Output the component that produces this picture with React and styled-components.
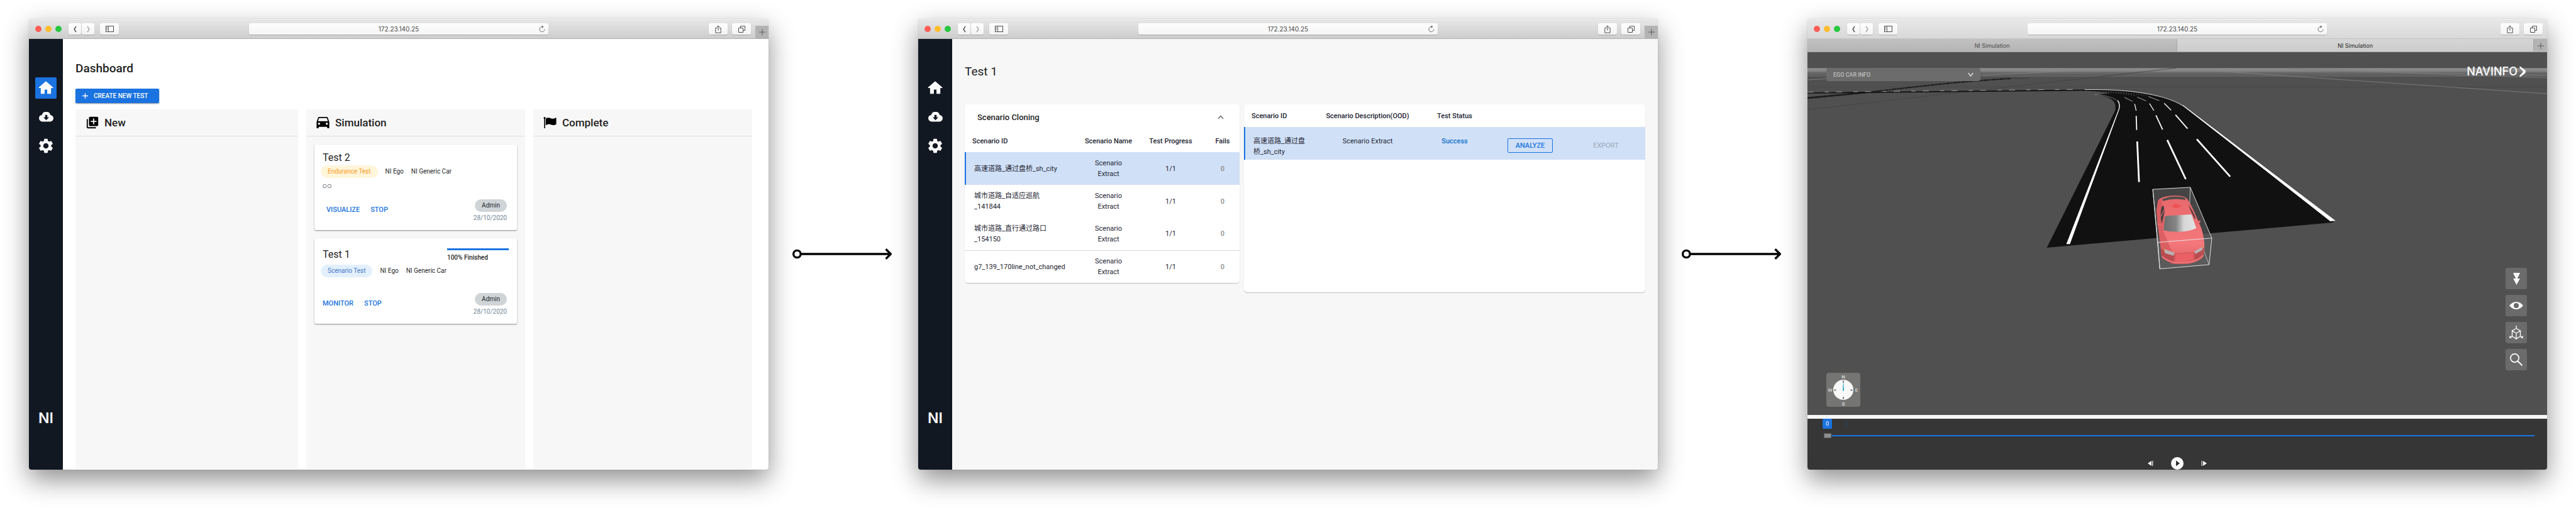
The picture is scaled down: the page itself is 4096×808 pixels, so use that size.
import React from "react";
import styled, { createGlobalStyle, css } from "styled-components";
import { MdSettings, MdLibraryAdd, MdAllInclusive } from "react-icons/md";

const GlobalStyle = createGlobalStyle`
  *, *::before, *::after { box-sizing: border-box; }
  body { margin: 0; background: #fff; }
  button, input, select { font: inherit; color: inherit; margin: 0; }
  button { border: 0; background: none; padding: 0; cursor: pointer; }
  svg { display: block; flex: none; }
  h1, h2, h3, p { margin: 0; font: inherit; }
`;

const blue = "#1a73e0";
const ink = "#1c2430";

/* ---------- page ---------- */

const Page = styled.div`
  min-height: 100vh;
  padding: 0 46px;
  display: grid;
  grid-template-columns: minmax(0, 1fr) 238px minmax(0, 1fr) 238px minmax(0, 1fr);
  font-family: Roboto, "Noto Sans CJK SC", sans-serif;
  color: #1f1f1f;
`;

const Connector = styled.div`
  align-self: center;
  padding-left: 38px;
`;

const Window = styled.section`
  margin: 30px 0 61px;
  display: flex;
  flex-direction: column;
  border-radius: 4px;
  background: #fff;
  box-shadow: 0 0 1px rgba(0, 0, 0, 0.4), 0 16px 40px rgba(0, 0, 0, 0.44);
  overflow: hidden;
`;

/* ---------- browser chrome ---------- */

const Chrome = styled.header`
  height: 32px;
  display: grid;
  grid-template-columns: minmax(0, 1fr) 476px minmax(0, 1fr);
  align-items: center;
  background: linear-gradient(#e7e7e7, ${(p) => (p.$tabs ? "#d8d8d8" : "#cdcdcd")});
  border-top: 1px solid #efefef;
  border-bottom: 1px solid ${(p) => (p.$tabs ? "#c4c4c4" : "#b2b2b2")};
`;

const ChromeLeft = styled.div`
  display: flex;
  align-items: center;
  padding-left: 10px;
`;

const Lights = styled.div`
  display: flex;
  gap: 6px;
  margin-right: 11px;
`;

const Light = styled.button`
  width: 10px;
  height: 10px;
  border-radius: 50%;
  background: ${(p) => p.$color};
`;

const ChromeRight = styled.div`
  display: flex;
  align-items: center;
  justify-content: flex-end;
  align-self: stretch;
  gap: 7px;
  padding-right: ${(p) => (p.$tabs ? "7px" : "0")};
`;

const ChromeButton = styled.button`
  width: ${(p) => (p.$small ? "20px" : "30px")};
  height: 18px;
  margin-left: ${(p) => p.$gap || 0}px;
  display: flex;
  align-items: center;
  justify-content: center;
  border-radius: 3px;
  background: linear-gradient(#fefefe, #f3f3f3);
  box-shadow: 0 1px 1px rgba(0, 0, 0, 0.2);
  color: ${(p) => (p.$dim ? "#a4a4a4" : "#4e4e4e")};
`;

const PlusButton = styled.button`
  width: 21px;
  height: ${(p) => (p.$tabs ? "auto" : "20px")};
  align-self: ${(p) => (p.$tabs ? "stretch" : "flex-end")};
  display: flex;
  align-items: center;
  justify-content: center;
  background: #b3b3b3;
  color: #5c5c5c;
`;

const AddressBar = styled.div`
  height: 18px;
  display: flex;
  align-items: center;
  padding-left: 20px;
  border-radius: 3px;
  background: linear-gradient(#fdfdfd, #f5f5f5);
  box-shadow: 0 1px 1px rgba(0, 0, 0, 0.2);
`;

const Address = styled.input`
  flex: 1;
  min-width: 0;
  height: 18px;
  padding: 0;
  border: 0;
  background: none;
  text-align: center;
  font-family: Inter, sans-serif;
  font-size: 10px;
  color: #474747;
`;

const Reload = styled.button`
  width: 20px;
  display: flex;
  justify-content: center;
  color: #6e6e6e;
`;

const TabBar = styled.div`
  height: 21px;
  display: grid;
  grid-template-columns: 1fr 1fr;
`;

const TabGroup = styled.div`
  display: flex;
`;

const Tab = styled.button`
  flex: 1;
  font-family: Inter, sans-serif;
  font-size: 9px;
  border-right: 1px solid #a9a9a9;
  border-bottom: 1px solid #a9a9a9;
  background: ${(p) => (p.$active ? "linear-gradient(#d6d6d6, #cccccc)" : "linear-gradient(#c1c1c1, #b5b5b5)")};
  color: ${(p) => (p.$active ? "#1f1f1f" : "#4a4a4a")};
`;

const Plus = ({ size = 10, width = 1 }) => (
  <svg width={size} height={size} viewBox="0 0 10 10" stroke="currentColor" strokeWidth={width}>
    <path d="M5 0V10M0 5H10" />
  </svg>
);

const Chevron = ({ d, w = 7, h = 11, width = 1.4 }) => (
  <svg width={w} height={h} viewBox={`0 0 ${w} ${h}`} fill="none" stroke="currentColor" strokeWidth={width}>
    <path d={d} />
  </svg>
);

function BrowserChrome({ tabs }) {
  return (
    <>
      <Chrome $tabs={tabs}>
        <ChromeLeft>
          <Lights>
            <Light $color="#ff5d55" aria-label="Close" />
            <Light $color="#fdbd2e" aria-label="Minimise" />
            <Light $color="#27c840" aria-label="Zoom" />
          </Lights>
          <ChromeButton $small aria-label="Back">
            <Chevron d="M5 1L2 5.5L5 10" />
          </ChromeButton>
          <ChromeButton $small $gap={1} $dim aria-label="Forward">
            <Chevron d="M2 1L5 5.5L2 10" />
          </ChromeButton>
          <ChromeButton $gap={9} aria-label="Show sidebar">
            <svg width="13" height="10" viewBox="0 0 13 10" fill="none" stroke="currentColor">
              <rect x=".5" y=".5" width="12" height="9" />
              <path d="M4.5 0V10M1.5 2.5H3.5M1.5 4.5H3.5M1.5 6.5H3.5" strokeWidth=".8" />
            </svg>
          </ChromeButton>
        </ChromeLeft>
        <AddressBar>
          <Address aria-label="Address" defaultValue="172.23.140.25" />
          <Reload aria-label="Reload">
            <svg width="10" height="12" viewBox="0 0 10 12" fill="none" stroke="currentColor">
              <path d="M8.9 6.6A4 4 0 1 1 5.2 2.6" />
              <path d="M4.6 .2L7.6 2.6L4.6 5Z" fill="currentColor" stroke="none" />
            </svg>
          </Reload>
        </AddressBar>
        <ChromeRight $tabs={tabs}>
          <ChromeButton aria-label="Share">
            <svg width="10" height="13" viewBox="0 0 10 13" fill="none" stroke="currentColor">
              <path d="M3.2 4.5H.8V12.2H9.2V4.5H6.8M5 8.5V1M2.7 3.2L5 .9L7.3 3.2" />
            </svg>
          </ChromeButton>
          <ChromeButton aria-label="Show all tabs">
            <svg width="11" height="11" viewBox="0 0 11 11" fill="none" stroke="currentColor">
              <path d="M.5 3.5H7.5V10.5H.5ZM3.5 3.5V.5H10.5V7.5H7.5" />
            </svg>
          </ChromeButton>
          {!tabs && (
            <PlusButton aria-label="New tab">
              <Plus />
            </PlusButton>
          )}
        </ChromeRight>
      </Chrome>
      {tabs && (
        <TabBar role="tablist">
          <Tab role="tab" aria-selected="false">NI Simulation</Tab>
          <TabGroup>
            <Tab role="tab" aria-selected="true" $active>NI Simulation</Tab>
            <PlusButton $tabs aria-label="New tab">
              <Plus />
            </PlusButton>
          </TabGroup>
        </TabBar>
      )}
    </>
  );
}

/* ---------- app frame ---------- */

const AppBody = styled.div`
  flex: 1;
  display: flex;
`;

const SideNav = styled.nav`
  width: 54px;
  flex: none;
  display: flex;
  flex-direction: column;
  align-items: center;
  gap: 12px;
  padding: 61px 0 68px;
  background: #121822;
  color: #fafafa;
`;

const NavLink = styled.a`
  width: 34px;
  height: 34px;
  display: flex;
  align-items: center;
  justify-content: center;
  border-radius: 2px;
  color: inherit;
  background: ${(p) => (p.$active ? blue : "transparent")};
`;

const Brand = styled.div`
  margin-top: auto;
  font-family: Inter, sans-serif;
  font-size: 23px;
  line-height: 28px;
  font-weight: 600;
`;

function Sidebar({ active }) {
  return (
    <SideNav aria-label="Main">
      <NavLink href="#home" aria-label="Home" $active={active}>
        <svg width="28" height="28" viewBox="0 0 24 24" fill="currentColor" stroke="currentColor" strokeLinejoin="round">
          <path d="M9.7 19.5V13.7H14.3V19.5H18.5V11.5H21.4L12 3.4L2.6 11.5H5.5V19.5Z" />
        </svg>
      </NavLink>
      <NavLink href="#download" aria-label="Download">
        <svg width="23" height="16" viewBox="0 0 23 16">
          <path
            fill="currentColor"
            d="M5.6 15.4A5.3 5.3 0 0 1 0 10.2A5.2 5.2 0 0 1 4.6 5A7 7 0 0 1 18.2 5A5.2 5.2 0 0 1 23 10.2A5.3 5.3 0 0 1 17.4 15.4Z"
          />
          <path fill="#121822" d="M9.8 4.8H13.2V8.6H16L11.5 13.2L7 8.6H9.8Z" />
        </svg>
      </NavLink>
      <NavLink href="#settings" aria-label="Settings">
        <MdSettings size={28} />
      </NavLink>
      <Brand>NI</Brand>
    </SideNav>
  );
}

/* ---------- dashboard ---------- */

const Dashboard = styled.main`
  flex: 1;
  min-width: 0;
  display: flex;
  flex-direction: column;
  padding: 35px 26px 1px 20px;
`;

const PageTitle = styled.h1`
  font-size: 19px;
  line-height: 24px;
  font-weight: ${(p) => p.$weight || 400};
`;

const CreateButton = styled.button`
  align-self: flex-start;
  height: 23px;
  min-width: 133px;
  margin: 20px 0 10px;
  padding: 0 14px 0 11px;
  display: flex;
  align-items: center;
  gap: 9px;
  border-radius: 2px;
  background: ${blue};
  color: #fff;
  font-size: 10px;
  font-weight: 500;
  box-shadow: 0 1px 2px rgba(0, 0, 0, 0.45);
`;

const Board = styled.div`
  flex: 1;
  display: grid;
  grid-template-columns: 354fr 348fr 348fr;
  gap: 13px;
`;

const Column = styled.section`
  background: #f7f7f7;
  border-radius: 1px;
`;

const ColumnHeader = styled.h2`
  height: 43px;
  display: flex;
  align-items: center;
  gap: 9px;
  padding-left: 16px;
  border-bottom: 1px solid #dedede;
  font-size: 17px;
  font-weight: 500;
`;

const IconSlot = styled.span`
  width: 21px;
  display: flex;
  justify-content: center;
  color: #000;
`;

const Cards = styled.div`
  display: grid;
  gap: 13px;
  padding: 13px;
`;

const Card = styled.article`
  min-height: 136px;
  display: flex;
  flex-direction: column;
  padding: ${(p) => (p.$roomy ? "16px" : "11px")} 13px 12px;
  border-radius: 2px;
  background: #fff;
  box-shadow: 0 1px 2px rgba(0, 0, 0, 0.45);
`;

const CardHeader = styled.div`
  display: flex;
  justify-content: space-between;
  min-height: ${(p) => (p.$roomy ? "26px" : "22px")};
`;

const CardTitle = styled.h3`
  font-size: 16px;
  line-height: 20px;
`;

const ProgressBox = styled.div`
  width: 98px;
  font-size: 10px;
  line-height: 14px;
  font-weight: 500;
`;

const ProgressTrack = styled.div`
  height: 3px;
  margin-bottom: 5px;
  background: #d0e0f7;
`;

const ProgressFill = styled.div`
  height: 3px;
  background: ${blue};
`;

const Chip = styled.span`
  height: 20px;
  padding: 0 11px;
  border-radius: 10px;
  font-size: 10px;
  line-height: 20px;
  ${(p) =>
    ({
      amber: css`background: #fff5da; color: #fb9a1c;`,
      sky: css`background: #e3f0fc; color: #4377c9;`,
      grey: css`background: #cfd4d7; color: #23282c;`,
    })[p.$tone]}
`;

const Tags = styled.div`
  display: flex;
  align-items: center;
  gap: 12px;
  margin-left: -3px;
  font-size: 10px;
  line-height: 20px;
`;

const Endless = styled.div`
  margin-top: 6px;
  color: #8a9094;
`;

const CardFooter = styled.div`
  margin-top: auto;
  display: flex;
  align-items: center;
  justify-content: space-between;
  padding-right: 3px;
`;

const Actions = styled.div`
  display: flex;
  gap: 17px;
  padding: 0 0 4px ${(p) => (p.$inset ? "6px" : "0")};
`;

const TextButton = styled.button`
  font-size: 11px;
  line-height: 14px;
  font-weight: 500;
  color: ${blue};
`;

const Owner = styled.div`
  display: flex;
  flex-direction: column;
  align-items: flex-end;
  gap: 3px;
`;

const DateText = styled.time`
  font-size: 10px;
  line-height: 14px;
  color: #748797;
`;

const tests = [
  { name: "Test 2", kind: "Endurance Test", tone: "amber", action: "VISUALIZE", endless: true },
  { name: "Test 1", kind: "Scenario Test", tone: "sky", action: "MONITOR", progress: 100 },
];

function TestCard({ test }) {
  const roomy = test.progress !== undefined;
  return (
    <Card $roomy={roomy}>
      <CardHeader $roomy={roomy}>
        <CardTitle>{test.name}</CardTitle>
        {roomy && (
          <ProgressBox>
            <ProgressTrack>
              <ProgressFill style={{ width: `${test.progress}%` }} />
            </ProgressTrack>
            {test.progress}% Finished
          </ProgressBox>
        )}
      </CardHeader>
      <Tags>
        <Chip $tone={test.tone}>{test.kind}</Chip>
        <span>NI Ego</span>
        <span>NI Generic Car</span>
      </Tags>
      {test.endless && (
        <Endless>
          <MdAllInclusive size={14} />
        </Endless>
      )}
      <CardFooter>
        <Actions $inset={test.endless}>
          <TextButton>{test.action}</TextButton>
          <TextButton>STOP</TextButton>
        </Actions>
        <Owner>
          <Chip $tone="grey">Admin</Chip>
          <DateText dateTime="2020-10-28">28/10/2020</DateText>
        </Owner>
      </CardFooter>
    </Card>
  );
}

function DashboardWindow() {
  return (
    <Window>
      <BrowserChrome />
      <AppBody>
        <Sidebar active />
        <Dashboard>
          <PageTitle $weight={500}>Dashboard</PageTitle>
          <CreateButton>
            <Plus size={9} width={1.4} />
            CREATE NEW TEST
          </CreateButton>
          <Board>
            <Column>
              <ColumnHeader>
                <IconSlot>
                  <MdLibraryAdd size={22} />
                </IconSlot>
                New
              </ColumnHeader>
            </Column>
            <Column>
              <ColumnHeader>
                <IconSlot>
                  <svg width="21" height="18" viewBox="3 5 18 16" fill="currentColor">
                    <path d="M18.92 6.01C18.72 5.42 18.16 5 17.5 5h-11c-.66 0-1.21.42-1.42 1.01L3 12v8c0 .55.45 1 1 1h1c.55 0 1-.45 1-1v-1h12v1c0 .55.45 1 1 1h1c.55 0 1-.45 1-1v-8l-2.08-5.99zM6.5 16c-.83 0-1.5-.67-1.5-1.5S5.67 13 6.5 13s1.5.67 1.5 1.5S7.33 16 6.5 16zm11 0c-.83 0-1.5-.67-1.5-1.5s.67-1.5 1.5-1.5 1.5.67 1.5 1.5-.67 1.5-1.5 1.5zM5 11l1.5-4.5h11L19 11H5z" />
                  </svg>
                </IconSlot>
                Simulation
              </ColumnHeader>
              <Cards>
                {tests.map((t) => (
                  <TestCard key={t.name} test={t} />
                ))}
              </Cards>
            </Column>
            <Column>
              <ColumnHeader>
                <IconSlot>
                  <svg width="21" height="18" viewBox="0 0 21 18">
                    <circle cx="2" cy="1.6" r="1.6" />
                    <path d="M1.2 2H2.8V18H1.2ZM3.8 2.6C7 .8 9.5 1.2 12 2.3C15 3.5 17.5 2.6 20.5 1V11.4C17.5 13.4 15 13.4 12 12.2C9.5 11.2 7 11.4 3.8 13.2Z" />
                  </svg>
                </IconSlot>
                Complete
              </ColumnHeader>
            </Column>
          </Board>
        </Dashboard>
      </AppBody>
    </Window>
  );
}

/* ---------- test details ---------- */

const Details = styled.main`
  flex: 1;
  min-width: 0;
  padding: 40px 20px 0;
  background: #f7f7f7;
`;

const Panels = styled.div`
  margin-top: 40px;
  display: grid;
  grid-template-columns: 437fr 638fr;
  gap: 7px;
  align-items: start;
`;

const Panel = styled.section`
  min-height: ${(p) => (p.$tall ? "299px" : "0")};
  border-radius: 5px;
  background: #fff;
  box-shadow: 0 1px 1px rgba(0, 0, 0, 0.25);
  overflow: hidden;
`;

const PanelHeader = styled.div`
  height: 40px;
  display: flex;
  align-items: center;
  justify-content: space-between;
  padding: 0 25px 0 20px;
  font-size: 13px;
`;

const PanelTitle = styled.h2`
  font-weight: 500;
`;

const Collapse = styled.button`
  color: #6e6e6e;
`;

const Table = styled.table`
  width: 100%;
  table-layout: fixed;
  border-collapse: collapse;
  font-size: 11px;
  line-height: 17px;
  color: ${ink};
`;

const HeadCell = styled.th`
  height: 36px;
  padding: 0 0 0 ${(p) => (p.$left ? "12px" : "0")};
  font-weight: 500;
  text-align: ${(p) => (p.$left ? "left" : "center")};
  white-space: nowrap;
`;

const Row = styled.tr`
  height: 52px;
  background: ${(p) => (p.$selected ? "#d0e0f7" : "#fff")};
  box-shadow: ${(p) => (p.$selected ? `inset 2px 0 0 ${blue}` : "none")};
  border-bottom: ${(p) => (p.$ruled ? "1px solid #d6d6d6" : "0")};
`;

const Cell = styled.td`
  padding: ${(p) => p.$top || 0}px 0 0 ${(p) => (p.$left ? "15px" : "0")};
  text-align: ${(p) => (p.$left ? "left" : "center")};
  vertical-align: ${(p) => (p.$top ? "top" : "middle")};
`;

const Fails = styled.strong`
  font-weight: 500;
  color: #8a8a8a;
`;

const Status = styled.strong`
  font-weight: 500;
  color: #0f6fc8;
`;

const OutlineButton = styled.button`
  width: 72px;
  height: 23px;
  border: 1px solid ${(p) => (p.disabled ? "transparent" : blue)};
  border-radius: 2px;
  font-size: 11px;
  line-height: 14px;
  color: ${(p) => (p.disabled ? "#9ba8ba" : blue)};
  font-weight: ${(p) => (p.disabled ? 400 : 500)};
`;

const scenarios = [
  { id: ["高速道路_通过盘桥_sh_city"], selected: true },
  { id: ["城市道路_自适应巡航", "_141844"] },
  { id: ["城市道路_直行通过路口", "_154150"], ruled: true },
  { id: ["g7_139_170line_not_changed"] },
];

const Lines = ({ of }) =>
  of.map((line, i) => (
    <React.Fragment key={line}>
      {i > 0 && <br />}
      {line}
    </React.Fragment>
  ));

function DetailsWindow() {
  return (
    <Window>
      <BrowserChrome />
      <AppBody>
        <Sidebar />
        <Details>
          <PageTitle>Test 1</PageTitle>
          <Panels>
            <Panel>
              <PanelHeader>
                <PanelTitle>Scenario Cloning</PanelTitle>
                <Collapse aria-label="Collapse">
                  <Chevron d="M1 6L5 1.5L9 6" w={10} h={7} width={1.5} />
                </Collapse>
              </PanelHeader>
              <Table>
                <colgroup>
                  <col />
                  <col width="87" />
                  <col width="111" />
                  <col width="54" />
                </colgroup>
                <thead>
                  <tr>
                    <HeadCell $left>Scenario ID</HeadCell>
                    <HeadCell>Scenario Name</HeadCell>
                    <HeadCell>Test Progress</HeadCell>
                    <HeadCell>Fails</HeadCell>
                  </tr>
                </thead>
                <tbody>
                  {scenarios.map((s) => (
                    <Row key={s.id[0]} $selected={s.selected} $ruled={s.ruled}>
                      <Cell $left>
                        <Lines of={s.id} />
                      </Cell>
                      <Cell>
                        <Lines of={["Scenario", "Extract"]} />
                      </Cell>
                      <Cell>1/1</Cell>
                      <Cell>
                        <Fails>0</Fails>
                      </Cell>
                    </Row>
                  ))}
                </tbody>
              </Table>
            </Panel>
            <Panel $tall>
              <Table>
                <colgroup>
                  <col />
                  <col width="153" />
                  <col width="124" />
                  <col width="116" />
                  <col width="125" />
                </colgroup>
                <thead>
                  <tr>
                    <HeadCell $left>Scenario ID</HeadCell>
                    <HeadCell>Scenario Description(OOD)</HeadCell>
                    <HeadCell>Test Status</HeadCell>
                    <HeadCell aria-label="Analyze" />
                    <HeadCell aria-label="Export" />
                  </tr>
                </thead>
                <tbody>
                  <Row $selected>
                    <Cell $left $top={14}>
                      <Lines of={["高速道路_通过盘", "桥_sh_city"]} />
                    </Cell>
                    <Cell $top={14}>Scenario Extract</Cell>
                    <Cell $top={14}>
                      <Status>Success</Status>
                    </Cell>
                    <Cell $top={18}>
                      <OutlineButton>ANALYZE</OutlineButton>
                    </Cell>
                    <Cell $top={18}>
                      <OutlineButton disabled>EXPORT</OutlineButton>
                    </Cell>
                  </Row>
                </tbody>
              </Table>
            </Panel>
          </Panels>
        </Details>
      </AppBody>
    </Window>
  );
}

/* ---------- simulation viewer ---------- */

const Viewer = styled.main`
  position: relative;
  flex: 1;
  display: flex;
  flex-direction: column;
  justify-content: space-between;
  padding: 22px 32px 13px 30px;
  background: #505050;
  overflow: hidden;
`;

const SceneLayer = styled.svg`
  position: absolute;
  inset: 0;
  width: 100%;
  height: 100%;
`;

const Overlay = styled.div`
  position: relative;
  display: flex;
  justify-content: space-between;
  align-items: ${(p) => p.$align || "flex-start"};
`;

const InfoBox = styled.label`
  width: 245px;
  height: 21px;
  margin-top: 3px;
  display: flex;
  align-items: center;
  padding: 0 11px;
  border-radius: 4px;
  background: #6c6c6c;
  color: #d2d2d2;
`;

const InfoSelect = styled.select`
  flex: 1;
  appearance: none;
  border: 0;
  padding: 0;
  background: none;
  font-size: 9px;
`;

const Wordmark = styled.div`
  display: flex;
  align-items: center;
  gap: 3px;
  color: #fff;
  font-family: Inter, sans-serif;
  font-size: 18px;
  line-height: 18px;
  font-weight: 500;
  padding-right: 2px;
`;

const Tools = styled.div`
  display: grid;
  gap: 9px;
  margin-bottom: 58px;
`;

const Tool = styled.button`
  width: 34px;
  height: 34px;
  display: flex;
  align-items: center;
  justify-content: center;
  border-radius: 3px;
  background: #6b6b6b;
  color: #fafafa;
`;

const Compass = styled.svg`
  border-radius: 4px;
  background: #757573;
  font-family: Roboto, sans-serif;
  font-size: 8px;
`;

const Timeline = styled.footer`
  height: 87px;
  display: flex;
  flex-direction: column;
  padding: 0 20px 0 24px;
  border-top: 6px solid #f7f7f7;
  background: #363636;
  color: #fafafa;
`;

const Marks = styled.div`
  display: flex;
  align-items: center;
  gap: 22px;
`;

const Frame = styled.output`
  width: 15px;
  height: 16px;
  border-radius: 2px;
  background: ${blue};
  font-size: 9px;
  line-height: 16px;
  text-align: center;
`;

const Tick = styled.i`
  width: 1px;
  height: 14px;
  background: #2c4668;
`;

const Scrubber = styled.input`
  appearance: none;
  height: 8px;
  margin: 7px 0 0 2px;
  background: linear-gradient(${blue}, ${blue}) center / 100% 2px no-repeat;
  &::-webkit-slider-thumb {
    appearance: none;
    width: 12px;
    height: 8px;
    border: 1px solid #5c5c5c;
    background: #8e8e8e;
  }
`;

const Transport = styled.div`
  margin-top: auto;
  padding-right: 4px;
  display: flex;
  align-items: center;
  justify-content: center;
  gap: 28px;
`;

const Step = styled.button`
  display: flex;
`;

function Scene() {
  return (
    <SceneLayer viewBox="3520 101 1440 707" preserveAspectRatio="none" aria-hidden="true">
      <defs>
        <linearGradient id="haze" x1="0" y1="0" x2="0" y2="1">
          <stop offset="0" stopColor="#8c8c8c" />
          <stop offset=".35" stopColor="#868686" />
          <stop offset=".5" stopColor="#707070" />
          <stop offset="1" stopColor="#505050" />
        </linearGradient>
        <linearGradient id="glass" x1="0" y1="0" x2="1" y2="0">
          <stop offset="0" stopColor="#6c6c6c" />
          <stop offset=".38" stopColor="#858585" />
          <stop offset=".62" stopColor="#d6d6d6" />
          <stop offset="1" stopColor="#e4e4e4" />
        </linearGradient>
        <linearGradient id="paint" x1="0" y1="0" x2="0" y2="1">
          <stop offset="0" stopColor="#e8686b" />
          <stop offset=".7" stopColor="#f4787b" />
          <stop offset="1" stopColor="#dd6063" />
        </linearGradient>
      </defs>

      <rect x="3520" y="132" width="1440" height="16" fill="url(#haze)" />
      <g fill="none" strokeWidth="1">
        <path d="M3520 141H4960M3520 144.5H3800M4050 143H4960" stroke="#666" />
        <path d="M3520 147.5H4960" stroke="#7b7b7b" />
        <path d="M3520 155L3570 152M3860 146L4040 137" stroke="#868686" />
        <path d="M4460 134L4960 151M4560 138L4960 146" stroke="#7d7d7d" />
        <path d="M3520 169H4960" stroke="#484848" />
        <path d="M3520 213L4237 132" stroke="#424242" />
        <path d="M4310 137L4334 139L4960 182" stroke="#848484" />
      </g>

      <path d="M3520 190.5C3620 183 3760 163 3850 157Q3890 153.5 3915 152.5" fill="none" stroke="#191919" strokeWidth="2.4" strokeDasharray="9 1 4 1" />
      <path d="M3915 152.5L3952 152" fill="none" stroke="#303030" strokeWidth="1.2" strokeDasharray="4 2" />
      <path d="M3520 190L3640 179" fill="none" stroke="#1c1c1c" strokeWidth="3" strokeDasharray="12 1" />
      <path d="M3520 180.5C3700 179 3900 176 4060 175" fill="none" stroke="#111" strokeWidth="2.4" />
      <path d="M3520 179C3700 177.5 3900 174.5 4060 173.5" fill="none" stroke="#bdbdbd" strokeWidth="1" strokeDasharray="12 22 8 14" />

      <path
        d="M4057 173.5L4125 175.5Q4180 181 4212 188Q4235 194 4250 205L4545 431L4542 433L3986 482L4118 217Q4124 200 4110 192Q4100 186 4080 184L4110 181Q4080 177 4057 176.5Z"
        fill="#111"
      />
      <g fill="none" stroke="#fff">
        <path d="M4080 183.5Q4110 186 4122 195Q4130 202 4126 214" strokeWidth="1" strokeDasharray="3 1" stroke="#bbb" />
        <path d="M4124 195Q4130 203 4125.5 215" strokeWidth="1.5" />
        <path d="M4060 174Q4130 173 4175 181Q4225 189 4250 205" strokeWidth="1.3" stroke="#d0d0d0" />
        <path d="M4060 177Q4120 178 4160 186M4100 178Q4140 179 4185 187" strokeWidth="1" strokeDasharray="2 3" stroke="#777" />
        <path d="M4137 189L4153 197M4162 188.5L4179.5 196M4184 187.5L4205 195.5" strokeWidth="1.2" stroke="#aaa" />
        <path d="M4157 201.7L4160 215M4186 201L4194.5 215M4214.5 200.5L4228 214" strokeWidth="1.5" />
        <path d="M4160 225L4161 252.7M4198.5 224L4211.5 252M4236.5 223L4260 250" strokeWidth="2.2" />
        <path d="M4162 275L4165.5 354M4220.5 272L4256.5 348.5M4278 270.5L4343 343.5" strokeWidth="3.4" />
      </g>
      <path d="M4125 214L4126.5 214L4031 475H4024Z" fill="#fff" />
      <path d="M4249.5 204.5L4251 204L4548 429.5L4538 430.5Z" fill="#fff" />

      <g transform="translate(4120 340) scale(.3333)">
        <path d="M217 85L436 73L562 370L546 525L258 550Z" fill="#555" opacity=".75" />
        <path d="M247 395L562 370L546 525L258 550Z" fill="#6a6a6a" opacity=".35" />
        <path d="M436 73L432 180" stroke="#ddd" strokeWidth="3" />
        <path d="M510 430L546 525" stroke="#ccc" strokeWidth="3" />
        <path
          d="M248 150Q262 126 340 121Q400 120 418 140Q440 170 468 236L500 310Q520 370 519 430L513 478Q490 508 430 520Q350 526 322 516L276 490Q262 470 264 430L248 310L238 210Z"
          fill="url(#paint)"
        />
        <path d="M248 150L268 140L284 240L278 330L330 450L270 430L264 430L248 310L238 210Z" fill="#d4585c" opacity=".75" />
        <path d="M264 430L345 462L340 510L322 516L276 490Q262 470 264 430Z" fill="#b94c50" />
        <path d="M460 455L517 425L513 478Q490 500 462 505Z" fill="#b94c50" />
        <path d="M272 142Q340 116 402 133L410 147Q340 133 278 153Z" fill="#4c4c4c" />
        <path d="M268 188L280 178L286 215L270 285Q256 240 268 188Z" fill="#4a4042" />
        <path d="M262 245L284 205" stroke="#e06a6e" strokeWidth="4" />
        <path d="M424 175Q450 205 468 256L462 258Q440 215 424 175Z" fill="#4f3a3c" />
        <path d="M288 241L443 231L471 312Q430 330 380 333Q320 335 280 324Z" fill="url(#glass)" />
        <path d="M324 186L346 169H356L386 184L355 196Z" fill="#f05254" />
        <path d="M241 285Q262 282 272 298L246 295Z" fill="#e66a6d" />
        <path d="M472 278L480 268L496 268Q496 282 478 286Z" fill="#e66a6d" />
        <path d="M283 434L345 457L338 473L288 458Z" fill="#b9b0b1" />
        <path d="M277 432L285 436V452Z" fill="#d98a2b" />
        <path d="M460 447L511 420L506 440L466 463Z" fill="#b9b0b1" />
        <path d="M507 416L513 414V430Z" fill="#d98a2b" />
        <path d="M348 461L455 455L460 494L430 503L345 508Z" fill="#ee6266" stroke="#b94c50" strokeWidth="3" />
        <path d="M350 470H456M349 480H458M348 490H459" stroke="#d5565a" strokeWidth="2" strokeDasharray="6 3" />
        <path d="M270 478Q300 505 345 512L440 508Q490 496 513 470" fill="none" stroke="#f0787b" strokeWidth="7" />
        <g fill="none" stroke="#e6e6e6" strokeWidth="3.5">
          <path d="M217 85L436 73L562 370L546 525L258 550L247 395L217 85L258 550" />
          <path d="M247 395L562 370" />
        </g>
      </g>
    </SceneLayer>
  );
}

function ViewerWindow() {
  return (
    <Window>
      <BrowserChrome tabs />
      <Viewer>
        <Scene />
        <Overlay>
          <InfoBox>
            <InfoSelect aria-label="Ego car info">
              <option>EGO CAR INFO</option>
            </InfoSelect>
            <Chevron d="M.7 1L4.5 6L8.3 1" w={9} h={7} width={1.6} />
          </InfoBox>
          <Wordmark>
            NAVINFO
            <svg width="10" height="18" viewBox="0 0 10 18" fill="currentColor">
              <path d="M.5 0L9 6.5Q11 9 9 11.5L.5 18V15L5.500 9.8Q6 9 5.5 8.2L.5 3Z" />
            </svg>
          </Wordmark>
        </Overlay>
        <Overlay $align="flex-end">
          <Compass width="54" height="54" viewBox="0 0 54 54" role="img" aria-label="Compass">
            <circle cx="27" cy="27" r="16" fill="#f8f8f8" />
            <path d="M27 12.5V15.5M27 38.5V41.5M12.5 27.5H15.5M38.5 27.5H41.5" stroke="#444" strokeWidth="1.5" />
            <path d="M26.7 15.5H27.3L28 28.5H26Z" fill="#1ba3ba" />
            <g fill="#f0f0f0" textAnchor="middle">
              <text x="27" y="9">N</text>
              <text x="27" y="52">S</text>
              <text x="6" y="30">W</text>
              <text x="48" y="30">E</text>
            </g>
          </Compass>
          <Tools>
            <Tool aria-label="Move down">
              <svg width="11" height="19" viewBox="0 0 11 19" fill="currentColor">
                <path d="M0 0H11L6.8 9H11L5.5 19L0 9H4.2Z" />
              </svg>
            </Tool>
            <Tool aria-label="View">
              <svg width="22" height="12" viewBox="0 0 22 12">
                <path d="M0 6Q5 0 11 0Q17 0 22 6Q17 12 11 12Q5 12 0 6Z" fill="currentColor" />
                <circle cx="11" cy="6" r="4" fill="#6b6b6b" />
              </svg>
            </Tool>
            <Tool aria-label="3D axes">
              <svg width="22" height="22" viewBox="0 0 22 22" fill="none" stroke="currentColor" strokeWidth="1.4">
                <path d="M11 0V5M4.5 8L11 4.5L17.5 8L11 12L4.5 8V17L11 20.5L17.5 17V8M11 12V20.5M4.5 16.5L.8 18.8M17.5 16.5L21.2 18.8" />
                <path d="M.8 16.5V19H3.5M21.2 16.5V19H18.5M9 19.5L11 21.3L13 19.5" />
              </svg>
            </Tool>
            <Tool aria-label="Search">
              <svg width="20" height="20" viewBox="0 0 20 20" fill="none" stroke="currentColor" strokeWidth="1.8">
                <circle cx="7.5" cy="7.5" r="6.6" />
                <path d="M12.2 12.2L18.8 18.8" strokeWidth="2" strokeLinecap="round" />
              </svg>
            </Tool>
          </Tools>
        </Overlay>
      </Viewer>
      <Timeline>
        <Marks>
          <Frame>0</Frame>
          <Tick />
        </Marks>
        <Scrubber type="range" min="0" max="100" defaultValue="0" aria-label="Frame" />
        <Transport>
          <Step aria-label="Previous frame">
            <svg width="9" height="8" viewBox="0 0 9 8" fill="currentColor">
              <path d="M6 0V8L0 4ZM7.2 0H8.4V8H7.2Z" />
            </svg>
          </Step>
          <Step aria-label="Play">
            <svg width="20" height="20" viewBox="0 0 20 20">
              <circle cx="10" cy="10" r="10" fill="#fafafa" />
              <path d="M8 5.5L14 10L8 14.5Z" fill="#2d2d2d" />
            </svg>
          </Step>
          <Step aria-label="Next frame">
            <svg width="9" height="8" viewBox="0 0 9 8" fill="currentColor">
              <path d="M3 0V8L9 4ZM.6 0H1.8V8H.6Z" />
            </svg>
          </Step>
        </Transport>
      </Timeline>
    </Window>
  );
}

const FlowArrow = () => (
  <Connector>
    <svg width="158" height="20" viewBox="0 0 193 24" fill="none" stroke="#000" strokeWidth="4" aria-hidden="true">
      <circle cx="9" cy="12" r="7" />
      <path d="M16 12H190M181.5 2.5L191 12L181.5 21.5" strokeLinejoin="round" />
    </svg>
  </Connector>
);

export default function App() {
  return (
    <>
      <GlobalStyle />
      <Page>
        <DashboardWindow />
        <FlowArrow />
        <DetailsWindow />
        <FlowArrow />
        <ViewerWindow />
      </Page>
    </>
  );
}
